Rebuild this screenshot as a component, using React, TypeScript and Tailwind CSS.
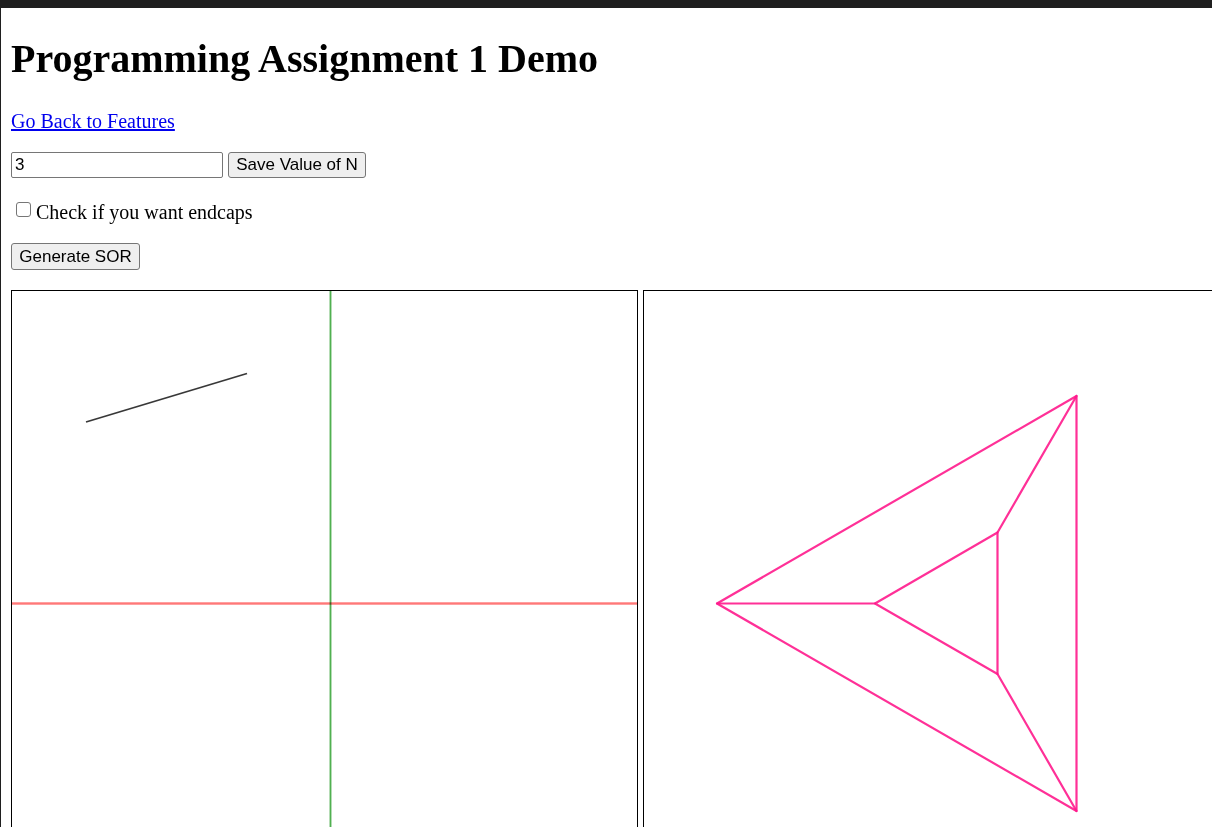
import { useState } from "react";

const buttonClass =
  "shrink-0 whitespace-nowrap rounded-[3px] border border-[#767676] bg-[#efefef] px-1 font-['Liberation_Sans',Arial,sans-serif] text-[17px] leading-6 text-black";

function DrawingPanel() {
  return (
    <div className="shrink-0 border border-black">
      <svg width="625" height="625" viewBox="0 0 625 625" role="img" aria-label="Profile line" className="block">
        <g shapeRendering="crispEdges">
          <rect x="0" y="311" width="625" height="3" fill="#ffa0a0" />
          <rect x="0" y="312" width="625" height="1" fill="#ff7878" />
          <g className="mix-blend-multiply">
            <rect x="317" y="0" width="3" height="625" fill="#b4dcb4" />
            <rect x="318" y="0" width="1" height="625" fill="#50b050" />
          </g>
        </g>
        <line x1="74" y1="131" x2="235" y2="82.5" stroke="#222222" strokeOpacity="0.9" strokeWidth="1.8" />
      </svg>
    </div>
  );
}

function SurfacePanel() {
  return (
    <div className="shrink-0 border border-black">
      <svg width="625" height="625" viewBox="0 0 625 625" role="img" aria-label="Surface of revolution" className="block">
        <g fill="none" stroke="#ff1a8c" strokeOpacity="0.9" strokeWidth="2.2" strokeLinejoin="round" strokeLinecap="round">
          <path d="M73 312.5 432.5 105V520Z" />
          <path d="M231 312.5 353.5 241.5V383Z" />
          <path d="M73 312.5H231M432.5 105 353.5 241.5M432.5 520 353.5 383" />
        </g>
      </svg>
    </div>
  );
}

export default function App() {
  const [sides, setSides] = useState("3");
  const [endcaps, setEndcaps] = useState(false);

  return (
    <div className="flex h-screen flex-col overflow-hidden bg-white font-['Liberation_Serif','Times_New_Roman',serif] text-[20px] leading-6 text-black">
      <div className="h-2 shrink-0 bg-[#1f1f1f]" />
      <main className="flex min-h-0 grow flex-col items-start overflow-hidden border-l border-[#1f1f1f] pl-[10px]">
        <h1 className="mt-7 text-[40px] font-bold leading-[46px]">Programming Assignment 1 Demo</h1>
        <a href="#features" className="mt-[27px] text-[#0000ee] underline">
          Go Back to Features
        </a>
        <div className="mt-[19px] flex gap-[5px]">
          <input
            type="text"
            aria-label="Value of N"
            value={sides}
            onChange={(e) => setSides(e.target.value)}
            className="h-[26px] w-[212px] rounded-[2px] border border-[#767676] bg-white px-[3px] font-['Liberation_Sans',Arial,sans-serif] text-[17px]"
          />
          <button type="button" className={`${buttonClass} h-[26px] w-[138px]`}>
            Save Value of N
          </button>
        </div>
        <label className="mt-[22px] flex items-center gap-[5px] pl-[5px]">
          <input
            type="checkbox"
            checked={endcaps}
            onChange={(e) => setEndcaps(e.target.checked)}
            className="mb-[5px] size-[15px] appearance-none rounded-[3px] border border-[#767676] bg-white checked:bg-[#0075ff]"
          />
          Check if you want endcaps
        </label>
        <button type="button" className={`${buttonClass} mt-[19px] h-[27px] w-[129px]`}>
          Generate SOR
        </button>
        <div className="mt-5 flex gap-[5px]">
          <DrawingPanel />
          <SurfacePanel />
        </div>
      </main>
    </div>
  );
}
